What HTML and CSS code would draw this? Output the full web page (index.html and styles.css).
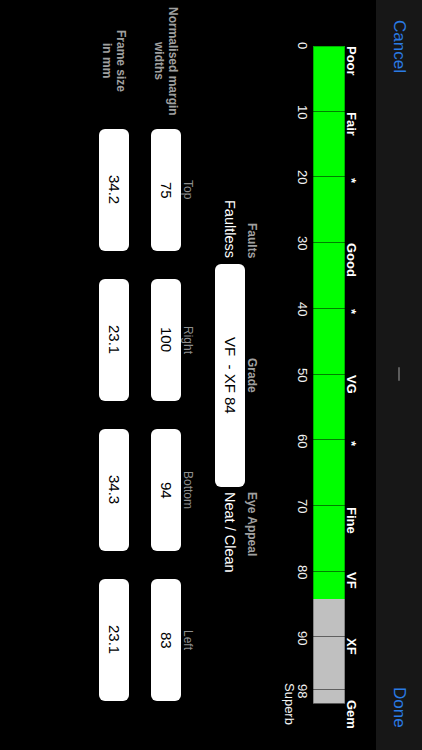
FILE: index.html
```html
<!DOCTYPE html>
<html lang="en">
<head>
<meta charset="utf-8">
<title>Grade</title>
<link rel="stylesheet" href="styles.css">
</head>
<body>
<div class="screen">
  <header class="nav">
    <span class="nav-btn">Cancel</span>
    <span class="handle"></span>
    <span class="nav-btn done">Done</span>
  </header>

  <section class="scale">
    <div class="scale-labels">
      <span>Poor</span><span>Fair</span><span>*</span><span>Good</span><span>*</span><span>VG</span><span>*</span><span>Fine</span><span>VF</span><span>XF</span><span>Gem</span>
    </div>
    <div class="bar" style="--grade: 84%">
      <span class="seg"></span><span class="seg"></span><span class="seg"></span><span class="seg"></span><span class="seg"></span><span class="seg"></span><span class="seg"></span><span class="seg"></span><span class="seg"></span><span class="seg seg-8"></span><span class="seg seg-2"></span>
    </div>
    <div class="scale-numbers">
      <span>0</span><span>10</span><span>20</span><span>30</span><span>40</span><span>50</span><span>60</span><span>70</span><span>80</span><span>90</span><span>98</span>
    </div>
    <div class="superb">Superb</div>
  </section>

  <section class="info">
    <div class="info-label end">Faults</div>
    <div class="info-label center">Grade</div>
    <div class="info-label">Eye Appeal</div>
    <div class="info-value end">Faultless</div>
    <div class="grade-box">VF&nbsp; - XF 84</div>
    <div class="info-value">Neat / Clean</div>
  </section>

  <section class="measures">
    <div class="sub-labels">
      <span class="sub-label">Top</span>
      <span class="sub-label">Right</span>
      <span class="sub-label">Bottom</span>
      <span class="sub-label">Left</span>
    </div>
    <div class="measure-row">
      <div class="row-label">Normalised margin<br>widths</div>
      <div class="boxes">
        <div class="value-box">75</div>
        <div class="value-box">100</div>
        <div class="value-box">94</div>
        <div class="value-box">83</div>
      </div>
    </div>
    <div class="measure-row frame">
      <div class="row-label">Frame size<br>in mm</div>
      <div class="boxes">
        <div class="value-box">34.2</div>
        <div class="value-box">23.1</div>
        <div class="value-box">34.3</div>
        <div class="value-box">23.1</div>
      </div>
    </div>
  </section>
</div>
</body>
</html>
```
FILE: styles.css
```css
html, body {
  margin: 0;
  padding: 0;
  width: 422px;
  height: 750px;
  overflow: hidden;
  background: #000;
}

body {
  font-family: "Liberation Sans", Arial, sans-serif;
}

/* The app is shown in landscape, turned a quarter clockwise:
   inline axis runs top-to-bottom, blocks stack right-to-left. */
.screen {
  writing-mode: vertical-rl;
  text-orientation: sideways;
  inline-size: 750px;
  block-size: 422px;
  background: #000;
  color: #fff;
}

.nav {
  block-size: 46px;
  box-sizing: border-box;
  background: #171717;
  display: grid;
  grid-template-columns: 1fr auto 1fr;
  align-items: center;
  padding-inline: 20px 22px;
}

.nav-btn {
  font-size: 17px;
  color: #2a7be4;
  justify-self: start;
}

.nav-btn.done {
  justify-self: end;
}

.handle {
  display: block;
  inline-size: 14px;
  block-size: 2px;
  background: #5c5c5c;
  border-radius: 1px;
}

.scale {
  margin-block-start: 18px;
}

.scale-labels {
  display: grid;
  grid-template-columns: repeat(9, 65.8px) 62px auto;
  margin-inline-start: 46px;
  font-size: 13px;
  font-weight: bold;
  line-height: 13px;
  white-space: nowrap;
}

.bar {
  margin-inline-start: 46px;
  inline-size: 658px;
  block-size: 32px;
  display: flex;
  background: linear-gradient(to bottom, #00ff00 var(--grade), #c0c0c0 var(--grade));
  box-shadow: inset 0 0 0 1px rgba(0, 0, 0, 0.3);
}

.seg {
  flex: 10 0 0;
  border-inline-start: 1px solid rgba(0, 0, 0, 0.5);
}

.seg:first-child {
  border-inline-start: none;
}

.seg-8 {
  flex-grow: 8;
}

.seg-2 {
  flex-grow: 2;
  border-inline-end: 1px solid #555;
}

.scale-numbers {
  display: grid;
  grid-template-columns: repeat(10, 65.8px) 40.2px;
  margin-inline-start: 13.1px;
  margin-block-start: 4px;
  font-size: 13px;
  line-height: 13px;
  text-align: center;
  color: #f2f2f2;
}

.superb {
  margin-inline-start: 664px;
  inline-size: 80px;
  text-align: center;
  font-size: 13px;
  line-height: 13px;
  color: #f2f2f2;
}

.info {
  margin-block-start: 24px;
  display: grid;
  grid-template-columns: 1fr 223px 1fr;
  grid-template-rows: 14px 30px;
  column-gap: 5px;
}

.info-label {
  font-size: 12px;
  font-weight: bold;
  line-height: 14px;
  color: #a0a0a0;
}

.end {
  text-align: end;
}

.center {
  text-align: center;
}

.info-value {
  font-size: 14.5px;
  line-height: 30px;
  color: #fff;
}

.grade-box {
  background: #fff;
  border-radius: 6px;
  color: #000;
  text-align: center;
  font-size: 15px;
  line-height: 30px;
}

.sub-labels {
  display: flex;
  gap: 28px;
  padding-inline-start: 129px;
  margin-block-start: 21px;
}

.sub-label {
  inline-size: 122px;
  text-align: center;
  font-size: 12px;
  line-height: 13px;
  color: #8e8e8e;
}

.measure-row {
  display: flex;
  align-items: center;
}

.measure-row.frame {
  margin-block-start: 22px;
}

.row-label {
  inline-size: 122px;
  text-align: center;
  font-size: 12px;
  font-weight: bold;
  line-height: 14px;
  color: #a0a0a0;
}

.boxes {
  display: flex;
  gap: 28px;
  margin-inline-start: 7px;
}

.value-box {
  inline-size: 122px;
  block-size: 30px;
  background: #fff;
  border-radius: 6px;
  color: #000;
  font-size: 15px;
  display: flex;
  align-items: center;
  justify-content: center;
}
```
